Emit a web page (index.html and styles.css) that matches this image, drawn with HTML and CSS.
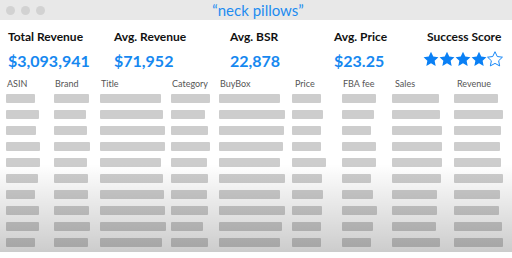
FILE: index.html
```html
<!DOCTYPE html>
<html lang="en">
<head>
    <meta charset="UTF-8">
    <meta name="viewport" content="width=device-width, initial-scale=1.0">
    <title>neck pillows</title>
    <link rel="stylesheet" href="styles.css">
</head>
<body>
    <!-- Window title bar -->
    <div class="titlebar">
        <div class="dots">
            <span class="dot"></span>
            <span class="dot"></span>
            <span class="dot"></span>
        </div>
        <div class="search-term">&ldquo;neck pillows&rdquo;</div>
    </div>

    <div class="stats">
        <div class="stat">
            <div class="stat-label">Total Revenue</div>
            <div class="stat-value">$3,093,941</div>
        </div>
        <div class="stat">
            <div class="stat-label">Avg. Revenue</div>
            <div class="stat-value">$71,952</div>
        </div>
        <div class="stat">
            <div class="stat-label">Avg. BSR</div>
            <div class="stat-value">22,878</div>
        </div>
        <div class="stat">
            <div class="stat-label">Avg. Price</div>
            <div class="stat-value">$23.25</div>
        </div>
        <div class="stat">
            <div class="stat-label">Success Score</div>
            <div class="stars" id="stars"></div>
        </div>
    </div>

    <div class="table-wrap">
        <div class="grid header">
            <div>ASIN</div>
            <div>Brand</div>
            <div>Title</div>
            <div>Category</div>
            <div>BuyBox</div>
            <div>Price</div>
            <div>FBA fee</div>
            <div>Sales</div>
            <div>Revenue</div>
        </div>
        <div id="rows"></div>
        <div class="fade"></div>
    </div>

    <script>
        // placeholder bar widths per row (px)
        const rows = [
            [29, 35, 61, 39, 61, 29, 34, 47, 44],
            [33, 32, 63, 34, 66, 31, 32, 48, 49],
            [30, 33, 65, 37, 65, 29, 29, 50, 47],
            [34, 36, 65, 39, 64, 29, 34, 50, 46],
            [34, 33, 61, 36, 61, 34, 34, 50, 47],
            [32, 34, 63, 37, 66, 30, 29, 49, 49],
            [29, 34, 64, 36, 61, 31, 31, 45, 46],
            [33, 35, 65, 37, 66, 30, 35, 45, 45],
            [33, 36, 66, 32, 63, 29, 31, 44, 48],
            [29, 34, 62, 37, 61, 29, 29, 48, 49]
        ];
        const rowsEl = document.getElementById('rows');
        rows.forEach(widths => {
            const row = document.createElement('div');
            row.className = 'grid row';
            widths.forEach(w => {
                const cell = document.createElement('div');
                cell.innerHTML = `<span class="bar" style="width:${w}px"></span>`;
                row.appendChild(cell);
            });
            rowsEl.appendChild(row);
        });

        const star = '<path d="M12 1.5l3.1 6.6 7.1.9-5.2 4.9 1.4 7.1L12 17.5l-6.4 3.5 1.4-7.1-5.2-4.9 7.1-.9z"/>';
        let html = '';
        for (let i = 0; i < 5; i++) {
            const cls = i < 4 ? 'star full' : 'star empty';
            html += `<svg class="${cls}" viewBox="1 1 22 21">${star}</svg>`;
        }
        document.getElementById('stars').innerHTML = html;
    </script>
</body>
</html>
```

FILE: styles.css
```css
body {
    margin: 0;
    font-family: Lato, "Open Sans", sans-serif;
    background-color: #ffffff;
    width: 512px;
    height: 258px;
    overflow: hidden;
}
.titlebar {
    height: 20px;
    background-color: #e8e8e8;
    position: relative;
    display: flex;
    align-items: center;
    justify-content: center;
}
.dots {
    position: absolute;
    left: 6px;
    top: 6px;
    display: flex;
    gap: 6px;
}
.dot {
    width: 9px;
    height: 9px;
    border-radius: 50%;
    background-color: #d2d2d2;
}
.search-term {
    color: #1d8cf0;
    font-size: 15px;
    margin-left: 4px;
}
.stats {
    display: grid;
    grid-template-columns: 106px 116px 104px 93px auto;
    padding: 9px 0 0 8px;
}
.stat-label {
    font-size: 12px;
    font-weight: bold;
    color: #111;
    height: 16px;
}
.stat-value {
    margin-top: 6px;
    font-size: 16px;
    font-weight: bold;
    color: #1688f0;
}
.stars {
    margin-top: 6px;
    margin-left: -4px;
    display: flex;
}
.star {
    width: 16px;
    height: 16px;
}
.star.full {
    fill: #0a80f5;
}
.star.empty {
    fill: none;
    stroke: #0a80f5;
    stroke-width: 1.3;
}
.table-wrap {
    position: relative;
    margin-top: 6px;
}
.grid {
    display: grid;
    grid-template-columns: 48px 46px 71px 48px 73px 50px 50px 62px auto;
    padding-left: 6px;
}
.header {
    font-size: 9px;
    color: #555;
    height: 16px;
    line-height: 16px;
}
.header div {
    padding-left: 1px;
}
.header div:nth-child(6),
.header div:nth-child(8),
.header div:nth-child(9) {
    padding-left: 3px;
}
.row {
    height: 16px;
}
.bar {
    display: block;
    height: 9px;
    margin-top: 2px;
    background-color: #cdcdcd;
    border-radius: 1px;
}
.fade {
    position: absolute;
    left: 0;
    right: 0;
    top: 88px;
    bottom: 0;
    background: linear-gradient(rgba(0, 0, 0, 0), rgba(0, 0, 0, 0.2));
}
```
